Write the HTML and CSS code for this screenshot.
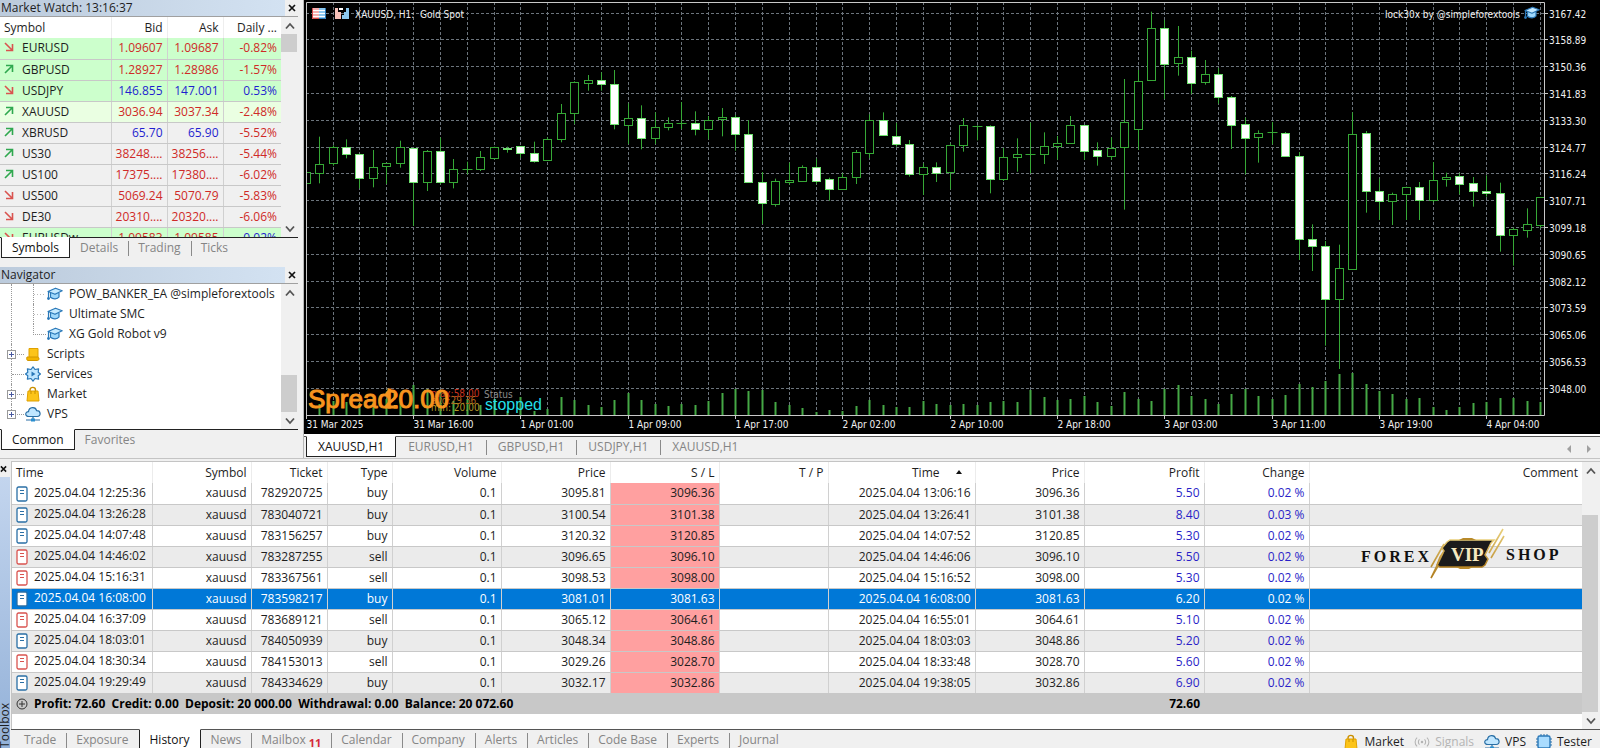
FILE: index.html
```html
<!DOCTYPE html>
<html lang="en">
<head>
  <meta charset="UTF-8" />
  <meta name="viewport" content="width=device-width, initial-scale=1.0"/>
  <title>XAUUSD,H1 - Gold Spot</title>
  <link rel="stylesheet" href="styles.css">
</head>
<body>

<!-- Shared icons -->
<svg class="defs" aria-hidden="true">
  <symbol id="i-cap" viewBox="0 0 16 14">
    <path d="M3.500 6v4.200c2.500 2.300 7 2 8.500-.2V6" fill="#9fd8fb" stroke="#2a78b8" stroke-width="1.200"/>
    <path d="M1 4.500 8.500 1.200l6.700 2.600L8 7.300z" fill="#c5eaff" stroke="#2a78b8" stroke-width="1.200" stroke-linejoin="round"/>
    <path d="M1.500 4.800v5.700" stroke="#2a78b8" stroke-width="1.200"/>
    <circle cx="1.500" cy="11.500" r="1.400" fill="#2a78b8"/>
  </symbol>
  <symbol id="i-bag" viewBox="0 0 16 16">
    <path d="M5 6V4c0-3.500 5.500-3.500 5.500 0v2" fill="none" stroke="#c98f00" stroke-width="1.400"/>
    <path d="M3 5h10l1 10H2z" fill="#fcc419" stroke="#e0a100"/>
    <path d="M6 5v3M10 5v3" stroke="#c98f00"/>
  </symbol>
  <symbol id="i-cloud" viewBox="0 0 16 16">
    <path d="M4 10.500C-.5 10.500 0 5.500 3.500 5.600 4 .8 10.500.2 11.600 4.600c4.400-.2 4.700 5.900.6 5.900z" fill="#bfe6ff" stroke="#2a6fa5" stroke-width="1.200"/>
    <path d="M8 10.500v3M1 14h14" stroke="#2a6fa5" stroke-width="1.200"/>
    <rect x="6" y="12.500" width="4" height="3" fill="#2a8fd0"/>
  </symbol>
  <symbol id="i-scroll" viewBox="0 0 16 16">
    <path d="M4 2.500h9v9H4z" fill="#fcc419" stroke="#e0a100"/>
    <path d="M2 11h10.500c2 0 2 3.500 0 3.500H3c-1.500 0-1.500-2-1-3.500z" fill="#f3b400" stroke="#d29700"/>
  </symbol>
  <symbol id="i-gear" viewBox="0 0 16 16">
    <path d="M8 .8 10 3.500l3.600-.6-.4 3.300L15.500 8l-2.300 1.800.4 3.300-3.600-.6-2 2.700-2-2.700-3.600.6.4-3.300L.5 8l2.300-1.800-.4-3.300 3.600.6z" fill="#bfe6ff" stroke="#2a78b8" stroke-width="1.200" stroke-linejoin="round"/>
    <path d="m6.500 5.500 4 2.500-4 2.500z" fill="#2a78b8"/>
  </symbol>
  <symbol id="i-chip" viewBox="0 0 16 16">
    <path d="M5 0v16M8 0v16M11 0v16M0 5h16M0 8h16M0 11h16" stroke="#2a6fa5"/>
    <rect x="2" y="2" width="12" height="12" rx="1.500" fill="#a9dcff" stroke="#2a78b8" stroke-width="1.400"/>
  </symbol>
  <symbol id="i-signal" viewBox="0 0 18 12">
    <g fill="none" stroke="#b4b4b4" stroke-width="1.200">
      <path d="M3.500 1C.5 3.500.5 8.500 3.500 11M6.200 3C4.500 4.500 4.500 7.500 6.200 9M11.800 3c1.700 1.500 1.700 4.500 0 6M14.500 1c3 2.500 3 7.500 0 10"/>
    </g>
    <circle cx="9" cy="6" r="1.400" fill="#b4b4b4"/>
  </symbol>
  <symbol id="i-up" viewBox="0 0 10 10"><path d="M1 9 8.500 1.500M2 1.500h6.500V8" fill="none" stroke="#2fa84f" stroke-width="1.600"/></symbol>
  <symbol id="i-down" viewBox="0 0 10 10"><path d="m1 1 7.500 7.500M2 8.500h6.500V2" fill="none" stroke="#d9534f" stroke-width="1.600"/></symbol>
  <symbol id="i-close" viewBox="0 0 8 8"><path d="m1 1 6 6M7 1 1 7" stroke="#111" stroke-width="1.700"/></symbol>
  <symbol id="i-chev-up" viewBox="0 0 10 8"><path d="M1 6.500 5 2l4 4.500" fill="none" stroke="#555" stroke-width="1.800"/></symbol>
  <symbol id="i-chev-down" viewBox="0 0 10 8"><path d="M1 1.500 5 6l4-4.500" fill="none" stroke="#555" stroke-width="1.800"/></symbol>
  <symbol id="i-doc" viewBox="0 0 12 16">
    <rect x="1" y="1" width="10" height="14" rx="1.500" fill="#fff" stroke="currentColor" stroke-width="1.300"/>
    <path d="M4 4.500h4M4 7.500h4" stroke="currentColor"/>
  </symbol>
</svg>

<div class="app">
  <div class="workspace">

    <!-- Left side panels -->
    <aside class="side">
      <section class="panel">
        <div class="panel-title">
          <h2>Market Watch: 13:16:37</h2>
          <button class="close" aria-label="Close Market Watch"><svg><use href="#i-close"/></svg></button>
        </div>
        <div class="panel-body market">
          <table class="quotes">
            <colgroup><col><col class="c-quote"><col class="c-quote"><col class="c-daily"></colgroup>
            <thead><tr><th>Symbol</th><th>Bid</th><th>Ask</th><th>Daily ...</th></tr></thead>
            <tbody id="quotes"></tbody>
          </table>
          <div class="scrollbar">
            <button aria-label="Scroll up"><svg><use href="#i-chev-up"/></svg></button>
            <div class="thumb thumb-market"></div>
            <button class="last" aria-label="Scroll down"><svg><use href="#i-chev-down"/></svg></button>
          </div>
        </div>
        <nav class="tabs">
          <button class="tab active">Symbols</button>
          <button class="tab">Details</button>
          <button class="tab">Trading</button>
          <button class="tab">Ticks</button>
        </nav>
      </section>

      <section class="panel">
        <div class="panel-title">
          <h2>Navigator</h2>
          <button class="close" aria-label="Close Navigator"><svg><use href="#i-close"/></svg></button>
        </div>
        <div class="panel-body navigator">
          <ul class="tree">
            <li class="child"><svg class="icon"><use href="#i-cap"/></svg>POW_BANKER_EA @simpleforextools</li>
            <li class="child"><svg class="icon"><use href="#i-cap"/></svg>Ultimate SMC</li>
            <li class="child end"><svg class="icon"><use href="#i-cap"/></svg>XG Gold Robot v9</li>
            <li class="node"><button class="expand" aria-label="Expand Scripts"></button><svg class="icon"><use href="#i-scroll"/></svg>Scripts</li>
            <li class="node leaf"><svg class="icon"><use href="#i-gear"/></svg>Services</li>
            <li class="node"><button class="expand" aria-label="Expand Market"></button><svg class="icon"><use href="#i-bag"/></svg>Market</li>
            <li class="node end"><button class="expand" aria-label="Expand VPS"></button><svg class="icon"><use href="#i-cloud"/></svg>VPS</li>
          </ul>
          <div class="scrollbar">
            <button aria-label="Scroll up"><svg><use href="#i-chev-up"/></svg></button>
            <div class="thumb thumb-nav"></div>
            <button aria-label="Scroll down"><svg><use href="#i-chev-down"/></svg></button>
          </div>
        </div>
        <nav class="tabs">
          <button class="tab active">Common</button>
          <button class="tab">Favorites</button>
        </nav>
      </section>
    </aside>

    <!-- Chart -->
    <main class="chart">
      <svg id="chart" viewBox="0 0 1296 434" role="img" aria-label="XAUUSD H1 candlestick chart"></svg>
      <nav class="tabs chart-tabs">
        <button class="tab active">XAUUSD,H1</button>
        <button class="tab">EURUSD,H1</button>
        <button class="tab">GBPUSD,H1</button>
        <button class="tab">USDJPY,H1</button>
        <button class="tab">XAUUSD,H1</button>
        <span class="arrows">
          <button aria-label="Previous charts"><svg viewBox="0 0 6 8"><path d="M5 0v8L1 4z"/></svg></button>
          <button aria-label="Next charts"><svg viewBox="0 0 6 8"><path d="M1 0v8l4-4z"/></svg></button>
        </span>
      </nav>
    </main>
  </div>

  <!-- Toolbox -->
  <section class="toolbox">
    <div class="strip">
      <button class="close" aria-label="Close Toolbox"><svg><use href="#i-close"/></svg></button>
      <div class="strip-title"><span>Toolbox</span></div>
    </div>
    <div class="toolbox-main">
      <div class="history-wrap">
        <div class="history-view">
          <table class="history">
            <colgroup>
              <col class="w-time"><col class="w-symbol"><col class="w-ticket"><col class="w-type">
              <col class="w-num"><col class="w-num"><col class="w-num"><col class="w-num">
              <col class="w-close"><col class="w-num"><col class="w-profit"><col class="w-change"><col>
            </colgroup>
            <thead>
              <tr>
                <th>Time</th><th>Symbol</th><th>Ticket</th><th>Type</th><th>Volume</th><th>Price</th>
                <th>S / L</th><th>T / P</th><th class="sorted">Time<i></i></th><th>Price</th><th>Profit</th><th>Change</th><th>Comment</th>
              </tr>
            </thead>
            <tbody id="history"></tbody>
            <tfoot>
              <tr>
                <td colspan="10">
                  <svg class="plus" viewBox="0 0 12 12"><circle cx="6" cy="6" r="5"/><path d="M6 3v6M3 6h6"/></svg>Profit: 72.60&nbsp; Credit: 0.00&nbsp; Deposit: 20 000.00&nbsp; Withdrawal: 0.00&nbsp; Balance: 20 072.60
                </td>
                <td>72.60</td><td></td><td></td>
              </tr>
            </tfoot>
          </table>
          <svg class="brand" viewBox="0 0 204 54" role="img" aria-label="Forex VIP Shop">
            <defs>
              <linearGradient id="gold" x1="0" y1="0" x2="0" y2="1">
                <stop offset="0" stop-color="#e9cf7a"/><stop offset="1" stop-color="#b07d1e"/>
              </linearGradient>
            </defs>
            <text class="brand-word" x="1" y="34">FOREX</text>
            <path d="m87 14 3-2h44l-3 3-4 8-2 4 3 4-3 6-3 2H80l-3-2 3-8 4-6-2-3z" fill="#1b1b1b" stroke="url(#gold)" stroke-width="1.500"/>
            <path d="M99 12l4-2h9l4 2zM96 39l4 2h9l4-2z" fill="#b88a2a"/>
            <path d="M84 16 71 39M83 25 71 50l7-12M143 1l-14 24M144 8l-13 22" fill="none" stroke="url(#gold)" stroke-width="1.600"/>
            <text class="brand-vip" x="91" y="33">VIP</text>
            <text class="brand-word" x="146" y="32">SHOP</text>
          </svg>
        </div>
        <div class="scrollbar">
          <button aria-label="Scroll up"><svg><use href="#i-chev-up"/></svg></button>
          <div class="thumb thumb-history"></div>
          <button aria-label="Scroll down"><svg><use href="#i-chev-down"/></svg></button>
        </div>
      </div>
      <footer class="status">
        <nav class="tabs bottom-tabs">
          <button class="tab">Trade</button>
          <button class="tab">Exposure</button>
          <button class="tab active">History</button>
          <button class="tab">News</button>
          <button class="tab">Mailbox<b>11</b></button>
          <button class="tab">Calendar</button>
          <button class="tab">Company</button>
          <button class="tab">Alerts</button>
          <button class="tab">Articles</button>
          <button class="tab">Code Base</button>
          <button class="tab">Experts</button>
          <button class="tab">Journal</button>
        </nav>
        <div class="services">
          <button><svg class="icon"><use href="#i-bag"/></svg>Market</button>
          <button disabled><svg class="icon"><use href="#i-signal"/></svg>Signals</button>
          <button><svg class="icon"><use href="#i-cloud"/></svg>VPS</button>
          <button><svg class="icon"><use href="#i-chip"/></svg>Tester</button>
        </div>
      </footer>
    </div>
  </section>
</div>

<script src="script.js"></script>
</body>
</html>
```

FILE: styles.css
```css
* {
  margin: 0;
  padding: 0;
  box-sizing: border-box;
}

body {
  background-color: #f0f0f0;
  font-family: "Open Sans", "Noto Sans", sans-serif;
  font-size: 12px;
  line-height: 16px;
  color: #1e1e1e;
  height: 100vh;
  overflow: hidden;
}

button {
  font: inherit;
  color: inherit;
  background: none;
  border: 0;
}

.defs {
  position: absolute;
  width: 0;
  height: 0;
}

.app {
  display: flex;
  flex-direction: column;
  height: 100vh;
}

.workspace {
  display: flex;
  flex: none;
  border-bottom: 1px solid #c4c4c4;
}

/* Side panels */
.side {
  flex: none;
  display: flex;
  flex-direction: column;
  gap: 8px;
  width: 304px;
  padding-right: 5px;
  border-right: 1px solid #b8b8b8;
}

.panel-title {
  display: flex;
  align-items: center;
  height: 17px;
  border-bottom: 1px solid #a0a0a0;
}

.panel-title h2 {
  flex: 1;
  font-size: 12px;
  font-weight: normal;
  padding-left: 1px;
  background: linear-gradient(90deg, #bccbdc, #d3e2f2);
}

.close {
  display: flex;
  align-items: center;
  justify-content: center;
  width: 13px;
  height: 16px;
}

.close svg {
  width: 8px;
  height: 8px;
}

.panel-body {
  display: flex;
  background: #fff;
  overflow: hidden;
}

.market {
  height: 220px;
}

.navigator {
  height: 145px;
}

.quotes {
  flex: 1;
  align-self: flex-start;
  table-layout: fixed;
  border-collapse: collapse;
  width: 281px;
}

.c-quote {
  width: 56px;
}

.c-daily {
  width: 58px;
}

.quotes th,
.quotes td {
  height: 21px;
  padding: 0 4px;
  text-align: right;
  font-weight: normal;
  white-space: nowrap;
  border-left: 1px solid #d0d0d0;
}

.quotes th {
  border-left-color: #eee;
}

.quotes th:first-child,
.quotes td:first-child {
  text-align: left;
  border-left: 0;
}

.quotes td {
  border-bottom: 1px solid #c8c8c8;
  color: #cf2a27;
}

.quotes td:first-child {
  color: #1e1e1e;
}

.quotes tbody tr {
  background: #f0f0f0;
}

.quotes tr.hot {
  background: #ccffcc;
}

.quotes tr.warm {
  background: #eaffe2;
}

.quotes td.up {
  color: #1f1fcf;
}

.quotes svg {
  width: 10px;
  height: 10px;
  margin-right: 8px;
}

/* Scrollbars */
.scrollbar {
  flex: none;
  display: flex;
  flex-direction: column;
  width: 17px;
  background: #f0f0f0;
}

.scrollbar button {
  display: flex;
  align-items: center;
  justify-content: center;
  height: 17px;
}

.scrollbar svg {
  width: 10px;
  height: 8px;
}

.scrollbar .last {
  margin-top: auto;
}

.thumb {
  width: 16px;
  background: #cdcdcd;
}

.thumb-market {
  height: 18px;
}

.thumb-nav {
  height: 37px;
  margin-top: auto;
}

.thumb-history {
  flex: 1;
  margin-top: 36px;
}

/* Tabs */
.tabs {
  display: flex;
  height: 22px;
  border-top: 1px solid #222;
}

.tab {
  position: relative;
  padding: 0 10px;
  height: 20px;
  color: #858585;
  white-space: nowrap;
}

.tab + .tab:not(.active)::before {
  content: "";
  position: absolute;
  left: 0;
  top: 3px;
  height: 15px;
  border-left: 1px solid #8a8a8a;
}

.tab.active + .tab::before {
  display: none;
}

.tab.active {
  margin-top: -1px;
  height: 21px;
  background: #fff;
  color: #111;
  border: 1px solid #222;
  border-top-color: #fff;
}

.side .tabs {
  padding-left: 1px;
}

/* Navigator tree */
.tree {
  flex: 1;
  list-style: none;
}

.tree li {
  position: relative;
  display: flex;
  align-items: center;
  height: 20px;
  white-space: nowrap;
}

.icon {
  flex: none;
  width: 16px;
  height: 16px;
}

.tree .icon {
  margin-right: 6px;
}

.tree .child {
  padding-left: 47px;
}

.tree .node {
  padding-left: 25px;
}

.tree li::before {
  content: "";
  position: absolute;
  left: 11px;
  top: 0;
  bottom: 0;
  border-left: 1px dotted #999;
}

.tree .node.end::before {
  bottom: 10px;
}

.tree li::after {
  content: "";
  position: absolute;
  left: 12px;
  top: 0;
  width: 12px;
  height: 10px;
  border-bottom: 1px dotted #999;
}

.tree .child::after {
  left: 33px;
  border-left: 1px dotted #999;
}

.tree .child:not(.end)::after {
  height: 20px;
  border-bottom: 0;
  background: linear-gradient(90deg, #bbb 50%, transparent 50%) 0 10px / 3px 1px repeat-x;
}

.expand {
  position: absolute;
  z-index: 1;
  left: 7px;
  top: 6px;
  width: 9px;
  height: 9px;
  border: 1px solid #999;
  background:
    linear-gradient(#4a5aa0, #4a5aa0) center / 5px 1px no-repeat,
    linear-gradient(#4a5aa0, #4a5aa0) center / 1px 5px no-repeat,
    #fff;
}

/* Chart */
.chart {
  flex: 1;
  min-width: 0;
}

#chart {
  display: block;
  width: 100%;
  background: #000;
}

#chart text {
  font-family: "DejaVu Sans Condensed", "DejaVu Sans", sans-serif;
  font-size: 10px;
  fill: #f0f0f0;
}

#chart .grid line {
  stroke: #6c747c;
  stroke-dasharray: 3 2;
}

#chart .axis {
  fill: none;
  stroke: #c8c8c8;
}

#chart .up,
#chart .wick {
  fill: #000;
  stroke: #36a836;
}

#chart .down {
  fill: #fff;
  stroke: #6fe06f;
}

#chart .volume {
  stroke: #45a845;
  stroke-width: 2;
}

#chart .spread {
  font-family: "Liberation Sans", Arial, sans-serif;
  font-size: 26px;
  fill: #f7931e;
  stroke: #f7931e;
}

#chart .stopped {
  font-family: "Liberation Sans", Arial, sans-serif;
  font-size: 16px;
  fill: #22dfe8;
}

#chart .label-status { fill: #8c8c8c; }
#chart .label-max { fill: #c8321e; }
#chart .label-avg { fill: #b4641e; }
#chart .label-min { fill: #b49a28; }

.chart-tabs {
  height: 22px;
  margin-top: 2px;
  padding-left: 2px;
  border-top: 1px solid #555;
  box-shadow: 0 -2px 0 #fff;
}

.chart-tabs .tab {
  padding: 0 12px;
}

.chart-tabs .tab.active {
  padding: 0 11px;
}

.arrows {
  display: flex;
  gap: 14px;
  margin: 2px 8px 0 auto;
}

.arrows svg {
  width: 6px;
  height: 8px;
  fill: #a0a0a0;
}

/* Toolbox */
.toolbox {
  display: flex;
  flex: 1;
  min-height: 0;
  padding-top: 2px;
}

.strip {
  flex: none;
  display: flex;
  flex-direction: column;
  width: 11px;
  padding-right: 1px;
  overflow: hidden;
}

.strip .close {
  width: 7px;
}

.strip-title {
  flex: 1;
  display: flex;
  align-items: flex-end;
  background: linear-gradient(#c3d5ee, #93b1d8);
}

.strip-title span {
  writing-mode: vertical-rl;
  rotate: 180deg;
  margin-left: -3px;
}

.toolbox-main {
  flex: 1;
  min-width: 0;
  display: flex;
  flex-direction: column;
}

.history-wrap {
  flex: 1;
  display: flex;
  border-top: 1px solid #c4c4c4;
  border-left: 1px solid #c4c4c4;
  padding-right: 1px;
}

.history-view {
  flex: 1;
  position: relative;
  background: #fff;
}

.history {
  width: 100%;
  table-layout: fixed;
  border-collapse: collapse;
}

.w-time { width: 140px; }
.w-symbol { width: 99px; }
.w-ticket { width: 76px; }
.w-type { width: 65px; }
.w-num { width: 109px; }
.w-close { width: 147px; }
.w-profit { width: 120px; }
.w-change { width: 105px; }

.history th,
.history td {
  height: 21px;
  padding: 0 4px;
  text-align: right;
  font-weight: normal;
  white-space: nowrap;
  border-right: 1px solid #d0d0d0;
}

.history th {
  border-right-color: #ececec;
}

.history td {
  border-bottom: 1px solid #c8c8c8;
}

.history th:last-child,
.history td:last-child {
  border-right: 0;
}

.history th:first-child,
.history td:first-child {
  text-align: left;
}

.history tbody tr:nth-child(even) {
  background: #ebebeb;
}

.history td:nth-child(7) {
  background: #ffa0a0;
}

.history td:nth-child(11),
.history td:nth-child(12) {
  color: #2a1fc8;
}

.history tbody tr.selected,
.history tbody tr.selected td {
  background: #0078d7;
  color: #fff;
}

.history .doc {
  width: 12px;
  height: 16px;
  margin-right: 6px;
  vertical-align: middle;
  color: #2a6fa5;
}

.history .sell .doc {
  color: #d9534f;
}

.sorted i {
  display: inline-block;
  margin: 0 9px 3px 16px;
  border: 3px solid transparent;
  border-top: 0;
  border-bottom: 4px solid #111;
}

.history tfoot td {
  background: #c8c8c8;
  border: 0;
  font-weight: bold;
  color: #000;
}

.history tfoot td:nth-child(2) {
  text-align: right;
}

.history .plus {
  width: 12px;
  height: 12px;
  margin-right: 6px;
  vertical-align: -2px;
  fill: none;
  stroke: #333;
}

.brand {
  position: absolute;
  right: 18px;
  top: 66px;
  width: 204px;
  height: 54px;
}

.brand-word {
  font-family: "Liberation Serif", "Times New Roman", serif;
  font-size: 16px;
  font-weight: bold;
  letter-spacing: 3px;
  fill: #111;
}

.brand-vip {
  font-family: "Liberation Serif", "Times New Roman", serif;
  font-size: 19px;
  font-weight: bold;
  fill: #f6e9c0;
}

/* Status bar */
.status {
  flex: none;
  display: flex;
  justify-content: space-between;
  height: 19px;
  border-top: 1px solid #555;
}

.bottom-tabs {
  padding-left: 3px;
  border-top: 0;
}

.bottom-tabs .tab b {
  position: relative;
  top: 3px;
  margin-left: 3px;
  color: #d62839;
  font-size: 11px;
}

.services {
  display: flex;
  gap: 10px;
  padding: 4px 8px 0 0;
}

.services button {
  display: flex;
  align-items: center;
  gap: 5px;
  height: 16px;
}

.services button:disabled {
  color: #b4b4b4;
}
```

FILE: script.js
```javascript
const quotes = [
  ["down", "EURUSD", "1.09607", "1.09687", "-0.82%", "hot"],
  ["up", "GBPUSD", "1.28927", "1.28986", "-1.57%", "hot"],
  ["down", "USDJPY", "146.855", "147.001", "0.53%", "hot", "up"],
  ["up", "XAUUSD", "3036.94", "3037.34", "-2.48%", "warm"],
  ["up", "XBRUSD", "65.70", "65.90", "-5.52%", "", "up"],
  ["up", "US30", "38248....", "38256....", "-5.44%", ""],
  ["up", "US100", "17375....", "17380....", "-6.02%", ""],
  ["down", "US500", "5069.24", "5070.79", "-5.83%", ""],
  ["down", "DE30", "20310....", "20320....", "-6.06%", ""],
  ["down", "EURUSDw", "1.09583", "1.09585", "0.02%", "hot"]
];

document.getElementById("quotes").innerHTML = quotes.map(([dir, name, bid, ask, daily, row, price = ""]) => `
  <tr class="${row}">
    <td><svg><use href="#i-${dir}"/></svg>${name}</td>
    <td class="${price}">${bid}</td>
    <td class="${price}">${ask}</td>
    <td class="${daily[0] === "-" ? "" : "up"}">${daily}</td>
  </tr>`).join("");

// open time, ticket, type, open price, stop loss, close time, profit, change
const deals = [
  ["12:25:36", "782920725", "buy", "3095.81", "3096.36", "13:06:16", "5.50", "0.02"],
  ["13:26:28", "783040721", "buy", "3100.54", "3101.38", "13:26:41", "8.40", "0.03"],
  ["14:07:48", "783156257", "buy", "3120.32", "3120.85", "14:07:52", "5.30", "0.02"],
  ["14:46:02", "783287255", "sell", "3096.65", "3096.10", "14:46:06", "5.50", "0.02"],
  ["15:16:31", "783367561", "sell", "3098.53", "3098.00", "15:16:52", "5.30", "0.02"],
  ["16:08:00", "783598217", "buy", "3081.01", "3081.63", "16:08:00", "6.20", "0.02"],
  ["16:37:09", "783689121", "sell", "3065.12", "3064.61", "16:55:01", "5.10", "0.02"],
  ["18:03:01", "784050939", "buy", "3048.34", "3048.86", "18:03:03", "5.20", "0.02"],
  ["18:30:34", "784153013", "sell", "3029.26", "3028.70", "18:33:48", "5.60", "0.02"],
  ["19:29:49", "784334629", "buy", "3032.17", "3032.86", "19:38:05", "6.90", "0.02"]
];
const selectedTicket = "783598217";

document.getElementById("history").innerHTML = deals.map(([open, ticket, type, price, sl, close, profit, change]) => `
  <tr class="${type}${ticket === selectedTicket ? " selected" : ""}">
    <td><svg class="doc"><use href="#i-doc"/></svg>2025.04.04 ${open}</td>
    <td>xauusd</td><td>${ticket}</td><td>${type}</td><td>0.1</td><td>${price}</td>
    <td>${sl}</td><td></td><td>2025.04.04 ${close}</td><td>${sl}</td>
    <td>${profit}</td><td>${change} %</td><td></td>
  </tr>`).join("");

// Candles: high, open/close top, open/close bottom, low (thirds of a pixel), 1 = bearish
const candles = [
  [518,518,550,550,0],[410,493,521,550,0],[436,442,491,497,0],[418,442,464,475,1],[463,463,534,565,1],
  [450,501,535,562,0],[490,490,499,552,0],[422,442,491,503,0],[444,444,548,678,1],[450,455,547,573,0],
  [413,453,548,553,1],[477,508,547,565,0],[485,508,508,523,0],[453,472,507,513,0],[440,442,474,478,0],
  [440,444,448,458,1],[438,440,461,473,1],[425,459,483,488,1],[412,418,482,482,0],[312,340,419,427,0],
  [244,247,341,372,0],[225,241,251,272,0],[217,240,253,272,1],[210,252,374,388,1],[310,355,377,432,0],
  [316,355,416,448,1],[337,382,416,432,0],[352,370,383,391,0],[306,370,370,387,0],[334,369,389,406,1],
  [348,361,389,418,0],[324,352,359,409,0],[345,351,404,452,1],[360,402,548,548,1],[516,546,611,672,1],
  [536,543,612,620,0],[488,541,548,554,0],[496,501,543,545,0],[476,501,545,552,1],[533,538,569,602,1],
  [520,531,567,570,0],[450,457,533,552,0],[343,360,459,474,0],[337,360,407,407,1],[369,408,434,440,1],
  [420,433,524,530,1],[490,501,524,585,0],[487,502,519,546,1],[430,436,518,568,0],[354,377,437,455,0],
  [376,379,379,421,0],[376,380,539,580,1],[444,472,539,543,0],[415,462,473,515,0],[368,463,463,520,0],
  [397,438,464,492,0],[408,430,440,479,0],[348,377,429,432,0],[376,377,453,480,1],[427,450,469,497,1],
  [412,445,470,480,0],[237,367,443,629,0],[210,244,389,450,0],[35,84,242,242,0],[60,86,192,297,1],
  [78,172,191,227,0],[152,171,250,282,1],[180,222,248,254,0],[204,222,293,311,1],[288,291,377,447,1],
  [353,373,416,523,1],[391,400,413,488,0],[366,398,398,433,0],[396,400,469,471,1],[456,468,717,780,1],
  [673,717,740,813,1],[723,739,899,1037,1],[734,805,899,1107,0],[337,403,807,807,0],[393,400,574,638,1],
  [536,573,605,660,1],[578,583,605,675,0],[560,563,584,660,0],[546,563,602,660,1],[486,541,602,607,0],
  [518,532,539,560,0],[520,528,552,583,1],[531,550,574,620,1],[526,573,581,590,1],[548,580,705,755,1],
  [683,687,705,797,0],[625,674,691,713,0],[592,592,675,684,0]
];

const volumes = [
  0,11,14,13,12,12,16,16,30,26,25,14,16,10,16,4,18,4,6,18,15,10,8,15,22,15,11,9,11,10,14,22,
  26,24,25,13,10,7,3,5,4,9,15,10,8,8,14,11,10,11,10,13,14,13,25,18,15,16,19,13,9,23,16,14,26,30,
  19,16,11,21,26,19,16,20,31,28,34,41,42,31,24,21,16,17,8,5,8,12,13,17,17,14,13
];

const times = [
  "31 Mar 2025", "31 Mar 16:00", "1 Apr 01:00", "1 Apr 09:00", "1 Apr 17:00", "2 Apr 02:00",
  "2 Apr 10:00", "2 Apr 18:00", "3 Apr 03:00", "3 Apr 11:00", "3 Apr 19:00", "4 Apr 04:00"
];

const plot = { left: 2, top: 2, right: 1240, bottom: 415 };
const step = 13.415;
const snap = v => Math.round(v - 0.5) + 0.5;
const candleX = i => snap(2.3 + i * step);
const line = (x1, y1, x2, y2, cls = "") => `<line class="${cls}" x1="${x1}" y1="${y1}" x2="${x2}" y2="${y2}"/>`;

let out = `<defs><clipPath id="plot"><rect x="2" y="2" width="1238" height="413"/></clipPath></defs><g class="grid">`;
for (let i = 2; i <= 92; i += 2) {
  out += line(candleX(i), plot.top, candleX(i), plot.bottom);
}
for (let k = 0; k < 15; k++) {
  const y = snap(13 + k * 26.81);
  out += line(plot.left, y, plot.right, y);
}
out += `</g><g clip-path="url(#plot)">`;

volumes.forEach((v, i) => {
  out += line(candleX(i), plot.bottom - v, candleX(i), plot.bottom, "volume");
});

candles.forEach(([high, top, bottom, low, bear], i) => {
  const x = candleX(i);
  const y1 = snap(top / 3);
  const y2 = snap(bottom / 3);
  out += line(x, high / 3, x, low / 3, "wick");
  if (top === bottom) {
    out += line(x - 5, y1, x + 5, y1, "wick");
  } else {
    out += `<rect class="${bear ? "down" : "up"}" x="${x - 4}" y="${y1}" width="8" height="${Math.max(1, y2 - y1)}"/>`;
  }
});
out += `</g>`;

// Axes and scale labels
out += `<path class="axis" d="M2.500 415V2.500H1240.500V415.500H2"/>`;
for (let k = 0; k < 15; k++) {
  const y = snap(13 + k * 26.81);
  out += line(plot.right, y, plot.right + 4, y, "axis");
  out += `<text x="1245" y="${y + 4}">${(3167.42 - k * 8.53).toFixed(2)}</text>`;
}
times.forEach((t, i) => {
  const x = candleX(i * 8);
  out += line(x, 415, x, 419, "axis");
  out += `<text x="${x}" y="428">${t}</text>`;
});

// Labels drawn over the plot
out += `
  <g stroke-width="1">
    <rect x="8" y="8" width="14" height="11" fill="#f6b0b0"/><rect x="15" y="8" width="7" height="11" fill="#8cc8f0"/>
    <path d="M8 10.500h14M8 13.500h14M8 16.500h14" stroke="#fff"/><path d="M8.500 8v10.500H15" fill="none" stroke="#d24a4a"/><path d="M15 18.500h6.500V8" fill="none" stroke="#2a78b8"/>
    <path d="M31 8h3v4h3v7h-6z" fill="#f6c0b8"/><path d="M40 12h2V8h3v11h-7v-4h2z" fill="#8cc8f0"/><path d="M35 8h4v2h-4z" fill="#fff"/>
  </g>
  <text x="51" y="18">XAUUSD, H1:&#160; Gold Spot</text>
  <text x="1216" y="18" text-anchor="end">lock30x by @simpleforextools</text>
  <svg x="1220" y="6" width="16" height="14"><use href="#i-cap"/></svg>
  <text class="label-max" x="127" y="397">max:58.00</text>
  <text class="label-avg" x="127" y="404">avg:29.36</text>
  <text class="label-min" x="127" y="411">min: 20.00</text>
  <text class="spread" x="4" y="408">Spread:</text>
  <text class="spread" x="80" y="408">20.00</text>
  <text class="label-status" x="180" y="398">Status</text>
  <text class="stopped" x="181" y="410">stopped</text>`;

document.getElementById("chart").innerHTML = out;
```
